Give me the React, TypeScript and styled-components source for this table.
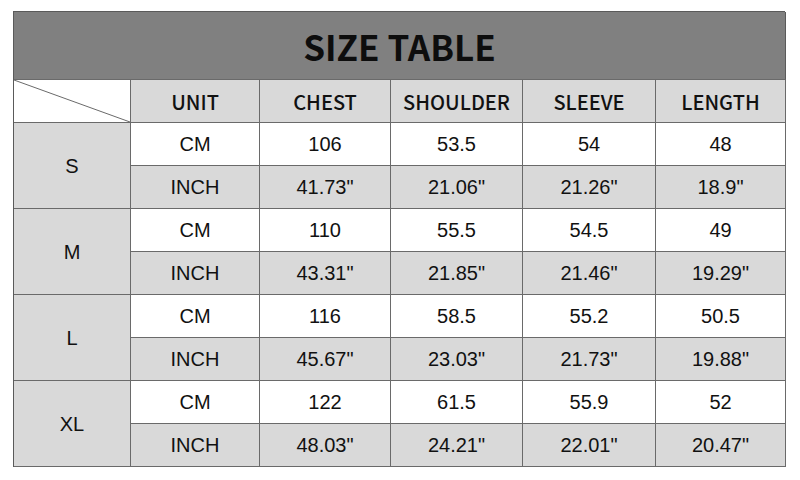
import React from "react";
import styled, { createGlobalStyle } from "styled-components";

const Global = createGlobalStyle`
  html, body { margin: 0; padding: 0; background: #ffffff; }
  body { width: 800px; height: 480px; overflow: hidden; }
`;

const Page = styled.div`
  padding: 11px 0 0 13px;
`;

const Table = styled.div`
  display: grid;
  grid-template-columns: 117px 129px 131px 132px 133px 130px;
  grid-template-rows: 68px repeat(9, 43px);
  width: 772px;
  box-sizing: border-box;
  border-top: 1px solid #5a5a5a;
  border-left: 1px solid #5a5a5a;
  color: #111;
`;

const Cell = styled.div<{ $bg?: string; $span?: number; $font?: "cjk" | "arial" }>`
  display: flex;
  align-items: center;
  justify-content: center;
  box-sizing: border-box;
  border-right: 1px solid #6a6a6a;
  border-bottom: 1px solid #6a6a6a;
  background: ${(p) => p.$bg ?? "#ffffff"};
  grid-row: ${(p) => (p.$span ? `span ${p.$span}` : "auto")};
  font-family: ${(p) =>
    p.$font === "cjk"
      ? `"Noto Sans CJK SC", "Noto Sans", sans-serif`
      : `"Liberation Sans", Arial, sans-serif`};
  font-weight: ${(p) => (p.$font === "cjk" ? 500 : 400)};
  font-size: 20px;
  padding-top: 1px;
`;

const Title = styled.div`
  grid-column: 1 / -1;
  display: flex;
  align-items: center;
  justify-content: center;
  background: #808080;
  border-right: 1px solid #5a5a5a;
  border-bottom: 1px solid #6a6a6a;
  font-family: "Noto Sans CJK SC", "Noto Sans", sans-serif;
  font-weight: 700;
  font-size: 35px;
  color: #0d0d0d;
  box-sizing: border-box;
`;

const Corner = styled.div`
  position: relative;
  border-right: 1px solid #6a6a6a;
  border-bottom: 1px solid #6a6a6a;
  background: #ffffff;
  box-sizing: border-box;
`;

const Diagonal = styled.svg`
  position: absolute;
  inset: 0;
  width: 100%;
  height: 100%;
`;

const HEADERS = ["UNIT", "CHEST", "SHOULDER", "SLEEVE", "LENGTH"];

const DATA = [
  { size: "S", cm: ["106", "53.5", "54", "48"], inch: ['41.73"', '21.06"', '21.26"', '18.9"'] },
  { size: "M", cm: ["110", "55.5", "54.5", "49"], inch: ['43.31"', '21.85"', '21.46"', '19.29"'] },
  { size: "L", cm: ["116", "58.5", "55.2", "50.5"], inch: ['45.67"', '23.03"', '21.73"', '19.88"'] },
  { size: "XL", cm: ["122", "61.5", "55.9", "52"], inch: ['48.03"', '24.21"', '22.01"', '20.47"'] },
];

const GRAY = "#d9d9d9";

export default function App() {
  return (
    <>
      <Global />
      <Page>
        <Table>
          <Title>SIZE TABLE</Title>
          <Corner>
            <Diagonal viewBox="0 0 116 42" preserveAspectRatio="none">
              <line x1="0" y1="0" x2="116" y2="42" stroke="#6a6a6a" strokeWidth="1" />
            </Diagonal>
          </Corner>
          {HEADERS.map((h) => (
            <Cell key={h} $bg={GRAY} $font="cjk">
              {h}
            </Cell>
          ))}
          {DATA.map((row) => (
            <React.Fragment key={row.size}>
              <Cell $bg={GRAY} $span={2}>
                {row.size}
              </Cell>
              <Cell>CM</Cell>
              {row.cm.map((v, i) => (
                <Cell key={`c${i}`}>{v}</Cell>
              ))}
              <Cell $bg={GRAY}>INCH</Cell>
              {row.inch.map((v, i) => (
                <Cell key={`i${i}`} $bg={GRAY}>
                  {v}
                </Cell>
              ))}
            </React.Fragment>
          ))}
        </Table>
      </Page>
    </>
  );
}
